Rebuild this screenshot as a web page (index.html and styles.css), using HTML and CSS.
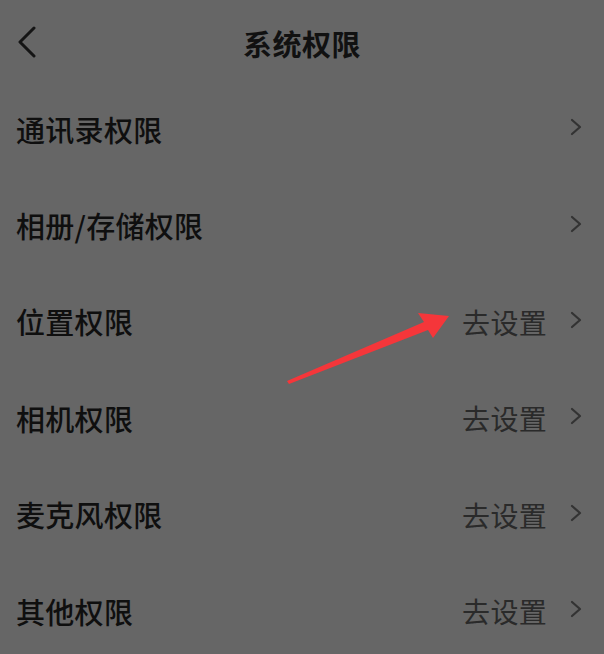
FILE: index.html
```html
<!DOCTYPE html>
<html lang="zh-CN">
<head>
<meta charset="utf-8">
<title>系统权限</title>
<link rel="stylesheet" href="styles.css">
</head>
<body>
<div class="page">
  <header class="topbar">
    <svg class="back" width="20" height="32" viewBox="0 0 20 32"><polyline points="17,2 3,16 17,30" fill="none" stroke="#151515" stroke-width="3" stroke-linecap="round" stroke-linejoin="round"/></svg>
    <h1 class="title">系统权限</h1>
  </header>
  <ul class="list">
    <li class="row"><span class="label">通讯录权限</span><span class="right"><svg class="chev" width="12" height="18" viewBox="0 0 12 18"><polyline points="2,2 10,9 2,16" fill="none" stroke="#333" stroke-width="2.2" stroke-linecap="round" stroke-linejoin="round"/></svg></span></li>
    <li class="row"><span class="label">相册/存储权限</span><span class="right"><svg class="chev" width="12" height="18" viewBox="0 0 12 18"><polyline points="2,2 10,9 2,16" fill="none" stroke="#333" stroke-width="2.2" stroke-linecap="round" stroke-linejoin="round"/></svg></span></li>
    <li class="row"><span class="label">位置权限</span><span class="right"><span class="value">去设置</span><svg class="chev" width="12" height="18" viewBox="0 0 12 18"><polyline points="2,2 10,9 2,16" fill="none" stroke="#333" stroke-width="2.2" stroke-linecap="round" stroke-linejoin="round"/></svg></span></li>
    <li class="row"><span class="label">相机权限</span><span class="right"><span class="value">去设置</span><svg class="chev" width="12" height="18" viewBox="0 0 12 18"><polyline points="2,2 10,9 2,16" fill="none" stroke="#333" stroke-width="2.2" stroke-linecap="round" stroke-linejoin="round"/></svg></span></li>
    <li class="row"><span class="label">麦克风权限</span><span class="right"><span class="value">去设置</span><svg class="chev" width="12" height="18" viewBox="0 0 12 18"><polyline points="2,2 10,9 2,16" fill="none" stroke="#333" stroke-width="2.2" stroke-linecap="round" stroke-linejoin="round"/></svg></span></li>
    <li class="row"><span class="label">其他权限</span><span class="right"><span class="value">去设置</span><svg class="chev" width="12" height="18" viewBox="0 0 12 18"><polyline points="2,2 10,9 2,16" fill="none" stroke="#333" stroke-width="2.2" stroke-linecap="round" stroke-linejoin="round"/></svg></span></li>
  </ul>
  <svg class="annot" width="604" height="654" viewBox="0 0 604 654"><polygon points="287,381 424,322 418,313 449,316 433,338 428,330 289,384" fill="#f5363a"/></svg>
</div>
</body>
</html>
```
FILE: styles.css
```css
html, body {
  margin: 0;
  padding: 0;
  background: #666666;
}
body {
  font-family: "Noto Sans CJK SC", "Noto Sans", sans-serif;
}
.page {
  position: relative;
  width: 604px;
  height: 654px;
  overflow: hidden;
  background: #666666;
}
.topbar {
  position: relative;
  height: 76px;
  padding-top: 5px;
  display: flex;
  align-items: center;
  justify-content: center;
}
.back {
  position: absolute;
  left: 17px;
  top: 26px;
}
.title {
  margin: 0;
  font-size: 29px;
  font-weight: 700;
  color: #111111;
  letter-spacing: 0.5px;
  line-height: 1;
  padding-left: 0;
}
.list {
  list-style: none;
  margin: 0;
  padding: 0;
}
.row {
  height: 96.4px;
  display: flex;
  align-items: center;
  justify-content: space-between;
  padding: 0 22px 0 16px;
}
.label {
  font-size: 29px;
  font-weight: 500;
  color: #0f0f0f;
  line-height: 1;
  letter-spacing: 0.3px;
}
.right {
  display: flex;
  align-items: center;
  gap: 23px;
}
.value {
  font-size: 28px;
  color: #2a2a2a;
  line-height: 1;
  letter-spacing: 0.3px;
}
.chev {
  display: block;
  margin-top: -4px;
}
.annot {
  position: absolute;
  left: 0;
  top: 0;
  pointer-events: none;
}
```
